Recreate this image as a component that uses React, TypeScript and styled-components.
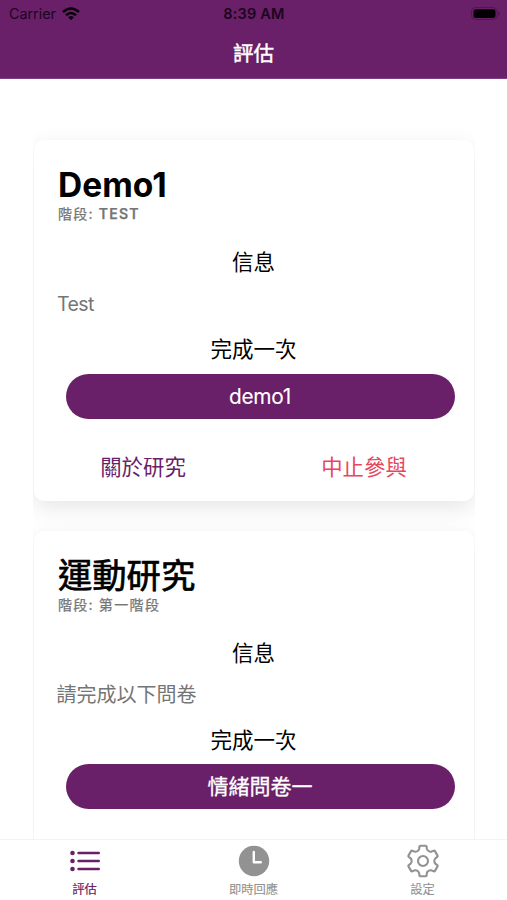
import React from "react";
import styled, { createGlobalStyle } from "styled-components";

const PURPLE = "#6a1f69";
const GREY = "#929292";
const RED = "#e8465f";

const GlobalStyle = createGlobalStyle`
  * { box-sizing: border-box; }
  body {
    margin: 0;
    background: #fff;
    font-family: Inter, "Noto Sans CJK TC", sans-serif;
    color: #000;
  }
  button { font-family: inherit; border: 0; padding: 0; background: none; }
  h1, h2, h3, p { margin: 0; font-weight: 400; }
`;

const Screen = styled.div`
  width: 507px;
  height: 900px;
  display: flex;
  flex-direction: column;
  overflow: hidden;
`;

const Header = styled.header`
  flex: none;
  height: 79px;
  background: ${PURPLE};
  border-bottom: 1px solid #803f80;
`;

const StatusBar = styled.div`
  display: grid;
  grid-template-columns: 1fr auto 1fr;
  align-items: center;
  height: 27px;
  padding: 0 6px 0 9px;
  font-size: 14.3px;
  color: #1a061c;
`;

const Carrier = styled.div`
  display: flex;
  align-items: center;
  gap: 6px;
`;

const Clock = styled.div`
  margin-left: -2px;
  font-weight: 600;
  font-size: 14.5px;
  letter-spacing: 0.2px;
`;

const Battery = styled.div`
  display: flex;
  justify-content: flex-end;
`;

const HeaderTitle = styled.h1`
  height: 52px;
  line-height: 53px;
  font-size: 20.5px;
  font-weight: 400;
  -webkit-text-stroke: 0.45px #fff;
  text-align: center;
  color: #fff;
`;

const Content = styled.main`
  flex: 1;
  min-height: 0;
  overflow: hidden;
  padding: 46px 32px 0 33px;
`;

const CardList = styled.div`
  display: flex;
  flex-direction: column;
  gap: 29.5px;
  overflow: hidden;
  height: 100%;
  padding: 15px 1px 0;
`;

const Card = styled.section`
  flex: none;
  height: 361px;
  padding: 24px 19px 0 24px;
  border-radius: 10px;
  background: #fff;
  box-shadow: 0 7px 22px rgba(0, 0, 0, 0.1);
`;

const CardTitle = styled.h2<{ $cjk?: boolean }>`
  height: 42px;
  line-height: 42px;
  font-size: ${(p) => (p.$cjk ? 34.3 : 33.5)}px;
  font-weight: ${(p) => (p.$cjk ? 400 : 700)};
  -webkit-text-stroke: ${(p) => (p.$cjk ? "0.7px #000" : "0")};
`;

const Phase = styled.p`
  height: 19px;
  line-height: 16px;
  font-size: 14px;
  letter-spacing: 1.2px;
  color: #757575;
  -webkit-text-stroke: 0.25px #757575;
`;

const PhaseName = styled.span`
  font-weight: 600;
  letter-spacing: 1.2px;

  &:lang(zh) { font-weight: 400; letter-spacing: 1.4px; }
`;

const SectionLabel = styled.h3<{ $top: number }>`
  height: 30px;
  margin-top: ${(p) => p.$top}px;
  line-height: 30px;
  font-size: 21.5px;
  text-align: center;
  padding-right: 6px;
`;

const Description = styled.p<{ $cjk?: boolean }>`
  height: 28px;
  margin: 13px 0 0 ${(p) => (p.$cjk ? -1.5 : -1)}px;
  line-height: 28px;
  font-size: ${(p) => (p.$cjk ? 20 : 19.5)}px;
  letter-spacing: ${(p) => (p.$cjk ? 0 : -0.6)}px;
  color: #757575;
`;

const PillButton = styled.button<{ $cjk?: boolean }>`
  display: block;
  width: 389px;
  height: 45px;
  margin: 9.5px 0 0 7.5px;
  line-height: 45px;
  border-radius: 23px;
  background: ${PURPLE};
  color: #fff;
  font-size: ${(p) => (p.$cjk ? 21 : 20.8)}px;
  font-weight: 400;
  letter-spacing: ${(p) => (p.$cjk ? 0 : -0.3)}px;
  -webkit-text-stroke: ${(p) => (p.$cjk ? 0.3 : 0.1)}px #fff;
`;

const CardActions = styled.div`
  display: grid;
  grid-template-columns: 1fr 1fr;
  margin: 31px -19.5px 0 -25.5px;
`;

const TextAction = styled.button<{ $color: string }>`
  height: 34px;
  line-height: 34px;
  font-size: 21.4px;
  color: ${(p) => p.$color};
`;

const TabBar = styled.nav`
  flex: none;
  height: 61px;
  display: grid;
  grid-template-columns: repeat(3, 1fr);
  border-top: 1px solid #f3f3f3;
  background: #fff;
`;

const Tab = styled.button<{ $active?: boolean }>`
  display: flex;
  flex-direction: column;
  align-items: center;
  padding-top: 4px;
  color: ${(p) => (p.$active ? PURPLE : GREY)};
  font-size: 12.3px;
  -webkit-text-stroke: ${(p) => (p.$active ? 0.2 : 0.1)}px currentColor;

  svg { height: 34px; }
  span { height: 22px; line-height: 24px; }
`;

function WifiIcon() {
  return (
    <svg width="18" height="14" viewBox="0 0 18 14" fill="none" stroke="#09020a" strokeWidth="2.5">
      <path d="M1 5Q9 -2 17 5" />
      <path d="M4 8.3Q9 3.8 14 8.3" />
      <path d="M6.2 10.3Q9 7.8 11.8 10.3L9 13.3Z" fill="#09020a" stroke="none" />
    </svg>
  );
}

function BatteryIcon() {
  return (
    <svg width="32" height="15" viewBox="0 0 32 15">
      <rect x="2.5" y="1.5" width="25.5" height="12" rx="4" fill="none" stroke="#501650" />
      <rect x="4.5" y="3.2" width="22" height="8.8" rx="2.2" fill="#040104" />
      <path d="M29.3 5.3v4.4q1.7-.7 1.7-2.2t-1.7-2.2z" fill="#501650" />
    </svg>
  );
}

function ListIcon() {
  return (
    <svg width="32" height="34" viewBox="0 0 32 34" stroke="currentColor" strokeWidth="2.4" strokeLinecap="round">
      {[9, 17, 25].map((y) => (
        <g key={y}>
          <circle cx="3.5" cy={y} r="2.3" fill="currentColor" stroke="none" />
          <path d={`M9.5 ${y}H29.8`} />
        </g>
      ))}
    </svg>
  );
}

function ClockIcon() {
  return (
    <svg width="32" height="34" viewBox="0 0 32 34">
      <circle cx="16" cy="17" r="15.2" fill="currentColor" />
      <path d="M15.8 8V18.3H22.8" fill="none" stroke="#fff" strokeWidth="2.4" strokeLinecap="round" strokeLinejoin="round" />
    </svg>
  );
}

// One tooth and the curved shoulder after it, repeated every 60 degrees around the hub.
function gearTooth(turn: number) {
  const a = (turn * Math.PI) / 3;
  const at = (x: number, y: number) =>
    `${(x * Math.cos(a) - y * Math.sin(a)).toFixed(2)} ${(x * Math.sin(a) + y * Math.cos(a)).toFixed(2)}`;
  return (
    `${turn ? "L" : "M"}${at(-3.9, -12)}L${at(-3.6, -14.4)}Q${at(-3.4, -15.3)} ${at(-2.6, -15.3)}` +
    `L${at(2.6, -15.3)}Q${at(3.4, -15.3)} ${at(3.6, -14.4)}L${at(3.9, -12)}` +
    `Q${at(4.6, -9.8)} ${at(6.9, -9.3)}Q${at(7.5, -9.1)} ${at(8.44, -9.38)}`
  );
}

const gearPath = [0, 1, 2, 3, 4, 5].map(gearTooth).join("") + "Z";

function GearIcon() {
  return (
    <svg width="34" height="34" viewBox="-17 -17 34 34" fill="none" stroke="currentColor" strokeWidth="2.1" strokeLinejoin="round">
      <path d={gearPath} />
      <circle r="5" />
    </svg>
  );
}

interface Study {
  title: string;
  cjk?: boolean;
  phase: string;
  description: string;
  task: string;
  actions?: boolean;
}

const studies: Study[] = [
  { title: "Demo1", phase: "TEST", description: "Test", task: "demo1", actions: true },
  { title: "運動研究", cjk: true, phase: "第一階段", description: "請完成以下問卷", task: "情緒問卷一" },
];

function StudyCard({ study }: { study: Study }) {
  return (
    <Card>
      <CardTitle $cjk={study.cjk}>{study.title}</CardTitle>
      <Phase>
        階段: <PhaseName lang={study.cjk ? "zh" : "en"}>{study.phase}</PhaseName>
      </Phase>
      <SectionLabel $top={22}>信息</SectionLabel>
      <Description $cjk={study.cjk}>{study.description}</Description>
      <SectionLabel $top={16}>完成一次</SectionLabel>
      <PillButton $cjk={study.cjk}>{study.task}</PillButton>
      {study.actions && (
        <CardActions>
          <TextAction $color={PURPLE}>關於研究</TextAction>
          <TextAction $color={RED}>中止參與</TextAction>
        </CardActions>
      )}
    </Card>
  );
}

export default function App() {
  return (
    <Screen>
      <GlobalStyle />
      <Header>
        <StatusBar>
          <Carrier>
            Carrier
            <WifiIcon />
          </Carrier>
          <Clock>8:39 AM</Clock>
          <Battery>
            <BatteryIcon />
          </Battery>
        </StatusBar>
        <HeaderTitle>評估</HeaderTitle>
      </Header>
      <Content>
        <CardList>
          {studies.map((s) => (
            <StudyCard key={s.title} study={s} />
          ))}
        </CardList>
      </Content>
      <TabBar>
        <Tab $active>
          <ListIcon />
          <span>評估</span>
        </Tab>
        <Tab>
          <ClockIcon />
          <span>即時回應</span>
        </Tab>
        <Tab>
          <GearIcon />
          <span>設定</span>
        </Tab>
      </TabBar>
    </Screen>
  );
}
